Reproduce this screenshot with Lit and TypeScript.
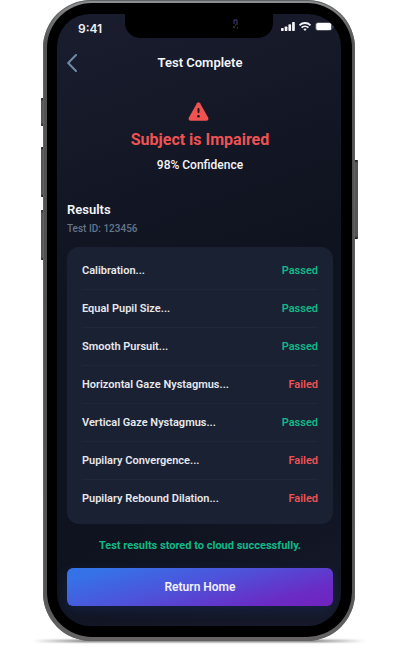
import { LitElement, html, css } from "lit";
import { customElement, property } from "lit/decorators.js";
import { classMap } from "lit/directives/class-map.js";

interface TestResult {
  name: string;
  passed: boolean;
}

const RESULTS: TestResult[] = [
  { name: "Calibration", passed: true },
  { name: "Equal Pupil Size", passed: true },
  { name: "Smooth Pursuit", passed: true },
  { name: "Horizontal Gaze Nystagmus", passed: false },
  { name: "Vertical Gaze Nystagmus", passed: true },
  { name: "Pupilary Convergence", passed: false },
  { name: "Pupilary Rebound Dilation", passed: false },
];

@customElement("status-bar")
export class StatusBar extends LitElement {
  static styles = css`
    :host {
      display: flex;
      justify-content: space-between;
      align-items: center;
      height: 29px;
      padding: 0 7px 0 21px;
      font: 600 12px/16px Inter, sans-serif;
      color: #eef0f5;
    }
    .notch {
      position: absolute;
      top: 0;
      left: 24%;
      right: 24%;
      height: 24px;
      border-radius: 0 0 15px 15px;
      background: #000;
    }
    .camera {
      position: absolute;
      top: 5px;
      right: 33px;
      width: 8px;
      height: 10px;
    }
    .signals {
      display: flex;
      align-items: center;
      gap: 4px;
      height: 24px;
      padding-bottom: 4px;
    }
    svg {
      display: block;
    }
  `;

  render() {
    return html`
      <span>9:41</span>
      <div class="notch">
        <svg class="camera" viewBox="0 0 8 10" fill="none">
          <path d="M2 5V1h3v5" stroke="#4d387c" />
          <path d="M1 8h2M5 9h1M3 6h1" stroke="#54555d" />
        </svg>
      </div>
      <div class="signals">
        <svg width="14" height="9" viewBox="0 0 14 9" fill="#f4f5f8">
          <rect x="0" y="6" width="2.7" height="3" rx=".7" />
          <rect x="3.7" y="4.5" width="2.7" height="4.5" rx=".7" />
          <rect x="7.4" y="2.3" width="2.7" height="6.7" rx=".7" />
          <rect x="11.1" y="0" width="2.7" height="9" rx=".7" />
        </svg>
        <svg width="12" height="9" viewBox="0 0 12 9" fill="none" stroke="#f4f5f8" stroke-width="1.800">
          <path d="M.5 3.3C3.600 .2 8.400 .2 11.500 3.300" />
          <path d="M2.600 5.700C4.500 3.900 7.500 3.900 9.400 5.700" />
          <path d="M4.300 7.100C5.200 6.300 6.800 6.300 7.700 7.100L6 9Z" fill="#f4f5f8" stroke="none" />
        </svg>
        <svg width="19" height="9" viewBox="0 0 19 9">
          <rect x=".5" y=".5" width="16.500" height="8" rx="2.500" fill="none" stroke="#4c505d" />
          <rect x="1.200" y="1" width="15" height="7" rx="1.500" fill="#fff" />
          <path d="M17.800 3v3q1-.5 1-1.500t-1-1.500" fill="#5b5f6b" />
        </svg>
      </div>
    `;
  }
}

@customElement("result-list")
export class ResultList extends LitElement {
  @property({ attribute: false }) results: TestResult[] = [];

  static styles = css`
    ul {
      margin: 0;
      padding: 5px 15px 6px;
      list-style: none;
      border-radius: 12px;
      background: #1a2133;
      font-size: 11px;
    }
    li {
      display: flex;
      justify-content: space-between;
      align-items: center;
      box-sizing: border-box;
      height: 38px;
      border-bottom: 1px solid #1e2839;
    }
    li:last-child {
      border-bottom-color: transparent;
    }
    .name {
      color: #e6e8ec;
    }
    .outcome {
      color: #ee5253;
    }
    .passed {
      color: #12b886;
    }
  `;

  render() {
    return html`
      <ul>
        ${this.results.map(
          (result) => html`
            <li>
              <span class="name">${result.name}...</span>
              <span class=${classMap({ outcome: true, passed: result.passed })}
                >${result.passed ? "Passed" : "Failed"}</span
              >
            </li>
          `
        )}
      </ul>
    `;
  }
}

@customElement("app-root")
export class AppRoot extends LitElement {
  static styles = css`
    :host {
      display: flow-root;
      box-sizing: border-box;
      min-height: 100vh;
      padding-right: 2px;
      overflow: hidden;
      background: #fff;
      font: 600 12px/16px Roboto, sans-serif;
      color: #f4f5f8;
    }
    .phone {
      position: relative;
      width: 78.4%;
      max-width: 430px;
      margin: 0 auto 10px;
    }
    .ground {
      position: absolute;
      left: -10px;
      right: -10px;
      bottom: -1px;
      height: 2px;
      background: linear-gradient(90deg, transparent, #555 50px, #555 calc(100% - 50px), transparent);
      filter: blur(1px);
    }
    .key {
      position: absolute;
      width: 4px;
      background: linear-gradient(#111, #555 3px, #555 calc(100% - 3px), #111);
      border-radius: 1px;
    }
    .mute {
      left: -2px;
      top: 98px;
      height: 28px;
    }
    .louder {
      left: -2px;
      top: 147px;
      height: 50px;
    }
    .quieter {
      left: -2px;
      top: 210px;
      height: 50px;
    }
    .power {
      right: -3px;
      top: 160px;
      height: 79px;
    }
    .frame {
      position: relative;
      padding: 3px 3px 4px 4px;
      border-radius: 48px;
      background: linear-gradient(#8e9191, #555 40px, #505050 300px, #555 590px, #666464);
      box-shadow: inset 0 0 0 1px #606263;
    }
    .bezel {
      padding: 11px 11px 11px 10px;
      border-radius: 45px;
      background: #000;
    }
    .screen {
      position: relative;
      border-radius: 33px;
      overflow: hidden;
      background: linear-gradient(160deg, #191d2e, #0f131f 45%, #0f131f 75%, #161a2b);
    }
    main {
      display: flex;
      flex-direction: column;
      padding: 5px 8px 20px 10px;
    }
    header {
      display: grid;
      grid-template-columns: 16px 1fr 16px;
      align-items: center;
      height: 30px;
    }
    .back {
      display: block;
      padding: 0;
      border: 0;
      background: none;
      color: #6f8aa5;
      cursor: pointer;
    }
    svg {
      display: block;
    }
    h1,
    h2,
    h3,
    p {
      margin: 0;
    }
    h1 {
      font-size: 13px;
      font-weight: 600;
      line-height: 16px;
      text-align: center;
    }
    .verdict {
      display: flex;
      flex-direction: column;
      align-items: center;
      padding-top: 24px;
      text-align: center;
    }
    .verdict svg {
      margin-right: 3px;
    }
    h2 {
      margin-top: 9px;
      font-size: 16px;
      line-height: 20px;
      color: #ee5253;
    }
    .confidence {
      margin-top: 7px;
      font-weight: 500;
    }
    h3 {
      margin-top: 29px;
      font-size: 13px;
      font-weight: 600;
      line-height: 16px;
    }
    .test-id {
      margin: 3px 0 10px;
      font-size: 10px;
      font-weight: 500;
      line-height: 16px;
      color: #64758d;
    }
    .stored {
      margin: 14px 0;
      font-size: 11px;
      font-weight: 700;
      text-align: center;
      color: #12b886;
    }
    .home {
      height: 38px;
      border: 0;
      border-radius: 6px;
      background: linear-gradient(165deg, #3572e8 10%, #4d53da 45%, #6a2cc5 80%, #7222bd);
      box-shadow: 0 4px 12px #18306a66;
      font: inherit;
      color: #f1f2fa;
      cursor: pointer;
    }
  `;

  render() {
    return html`
      <div class="phone">
        <div class="ground"></div>
        <div class="key mute"></div>
        <div class="key louder"></div>
        <div class="key quieter"></div>
        <div class="key power"></div>
        <div class="frame">
          <div class="bezel">
            <div class="screen">
              <status-bar></status-bar>
              <main>
                <header>
                  <button class="back" aria-label="Back">
                    <svg width="10" height="18" viewBox="0 0 10 18" fill="none">
                      <path d="M9 1L1.200 9L9 17" stroke="currentColor" stroke-width="2" stroke-linecap="round" stroke-linejoin="round" />
                    </svg>
                  </button>
                  <h1>Test Complete</h1>
                </header>
                <section class="verdict">
                  <svg width="21" height="19" viewBox="0 0 21 19">
                    <path
                      d="M8.900 1.300Q10.500-.7 12.100 1.300L20.100 15.400Q21.300 18.400 18.400 18.700H2.600Q-.3 18.400.9 15.400Z"
                      fill="#f05252"
                    />
                    <path d="M10.500 7v3" stroke="#141724" stroke-width="2" stroke-linecap="round" />
                    <circle cx="10.500" cy="14.300" r="1.300" fill="#141724" />
                  </svg>
                  <h2>Subject is Impaired</h2>
                  <p class="confidence">98% Confidence</p>
                </section>
                <h3>Results</h3>
                <p class="test-id">Test ID: 123456</p>
                <result-list .results=${RESULTS}></result-list>
                <p class="stored">Test results stored to cloud successfully.</p>
                <button class="home">Return Home</button>
              </main>
            </div>
          </div>
        </div>
      </div>
    `;
  }
}
